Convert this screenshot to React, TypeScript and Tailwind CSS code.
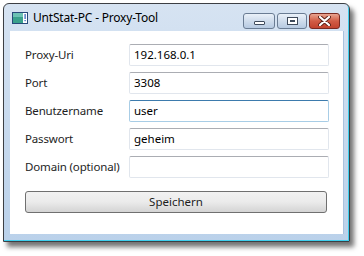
export default function App() {
  const rows = [
    { label: "Proxy-Uri", value: "192.168.0.1" },
    { label: "Port", value: "3308" },
    { label: "Benutzername", value: "user", focused: true },
    { label: "Passwort", value: "geheim" },
    { label: "Domain (optional)", value: "" },
  ]

  return (
    <div
      className="w-[364px] h-[256px] bg-white pl-[3px] pt-[3px]"
      style={{ fontFamily: '"Noto Sans", "Open Sans", sans-serif' }}
    >
      <div className="w-[347px] h-[239px] flex flex-col rounded-t-[6px] border border-[#3c3f44] bg-gradient-to-b from-[#d6e3f2] to-[#bad1ea] shadow-[4px_5px_5px_rgba(0,0,0,0.55),inset_-1px_-1px_0_#3fcfee]">
        {/* title bar */}
        <div className="h-[27px] flex items-center pl-[8px] pr-[9px]">
          <svg width="16" height="12" viewBox="0 0 16 12" className="mt-[1px]">
            <rect x="0.5" y="0.5" width="15" height="11" fill="#fff" stroke="#284a7a" />
            <rect x="1" y="1" width="10" height="10" fill="#3aa18c" />
            <rect x="1" y="1" width="10" height="4" fill="#6cc2b4" />
            <rect x="12.5" y="2" width="1.2" height="5" fill="#2b59b8" />
            <rect x="12.5" y="8" width="1.2" height="1.2" fill="#2b59b8" />
          </svg>
          <span className="ml-[5px] text-[12px] text-black leading-none tracking-[-0.2px]">
            UntStat-PC - Proxy-Tool
          </span>
          <div className="ml-auto flex gap-[2px] self-start mt-[9px]">
            <div className="w-[32px] h-[16px] rounded-[3px] border border-[#6a7c93] bg-gradient-to-b from-[#eaf1f9] via-[#cfdcec] to-[#b6cae1] flex items-center justify-center">
              <div className="w-[11px] h-[4px] mt-[4px] bg-white border border-[#3f4b5c] rounded-[1px]" />
            </div>
            <div className="w-[30px] h-[16px] rounded-[3px] border border-[#6a7c93] bg-gradient-to-b from-[#eaf1f9] via-[#cfdcec] to-[#b6cae1] flex items-center justify-center">
              <div className="w-[11px] h-[8px] border border-[#3f4b5c] bg-white flex items-center justify-center">
                <div className="w-[5px] h-[2px] border border-[#3f4b5c]" />
              </div>
            </div>
            <div className="w-[31px] h-[16px] rounded-[3px] border border-[#7a2a22] bg-gradient-to-b from-[#e8a491] via-[#d15c45] to-[#c2432e] flex items-center justify-center">
              <svg width="13" height="10" viewBox="0 0 13 10">
                <path
                  d="M2 1 L11 9 M11 1 L2 9"
                  stroke="#5a2018"
                  strokeWidth="4"
                  strokeLinecap="round"
                />
                <path
                  d="M2 1 L11 9 M11 1 L2 9"
                  stroke="#fff"
                  strokeWidth="2.2"
                  strokeLinecap="round"
                />
              </svg>
            </div>
          </div>
        </div>

        {/* client */}
        <div className="flex-1 flex">
          <div className="flex-1 ml-[6px] mr-[5px] mb-[7px] bg-white border-r border-[#a9c2de] pt-[13px] pl-[15px] pr-[13px]">
            <div className="grid grid-cols-[104px_200px] gap-y-[6px] items-center">
              {rows.map((r) => (
                <div key={r.label} className="contents">
                  <div className="text-[11.5px] text-[#1e1e1e] leading-none tracking-[-0.15px]">
                    {r.label}
                  </div>
                  <div
                    className={
                      r.focused
                        ? "h-[22px] flex items-center pl-[4px] border border-[#a8cde6] border-t-[#3d7bad] rounded-[2px] text-[11.5px] text-black"
                        : "h-[22px] flex items-center pl-[4px] border border-[#e1e6ed] border-t-[#abadb3] rounded-[2px] text-[11.5px] text-black"
                    }
                  >
                    {r.value}
                  </div>
                </div>
              ))}
            </div>
            <button className="mt-[13px] w-[302px] h-[22px] rounded-[3px] border border-[#707070] bg-gradient-to-b from-[#f2f2f2] via-[#ebebeb] to-[#d4d4d4] text-[11.5px] text-[#1e1e1e] flex items-center justify-center">
              Speichern
            </button>
          </div>
        </div>
      </div>
    </div>
  )
}
